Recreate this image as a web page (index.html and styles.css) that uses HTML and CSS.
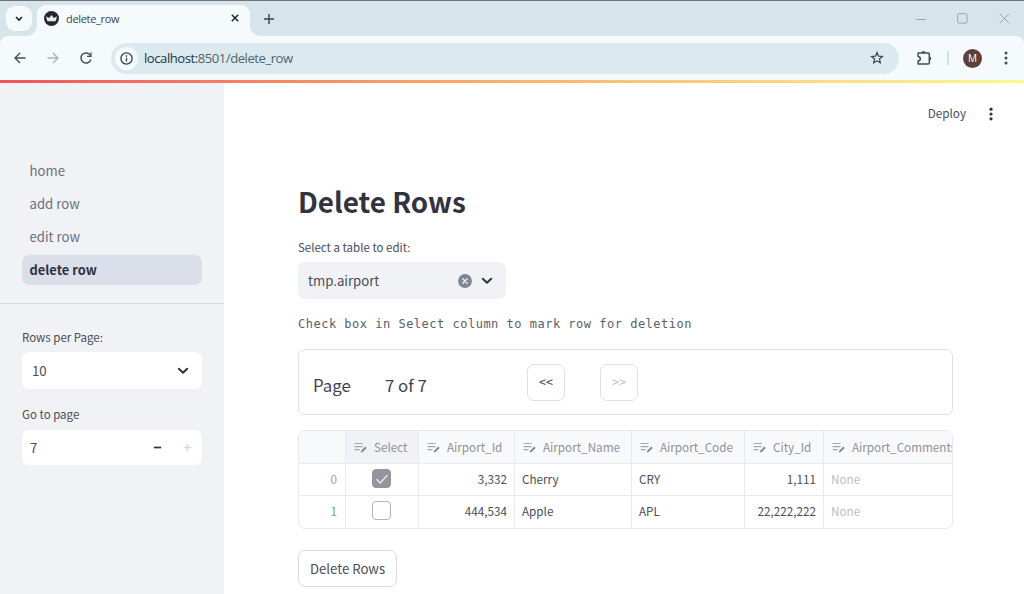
FILE: index.html
```html
<!DOCTYPE html>
<html lang="en">
<head>
<meta charset="utf-8">
<title>delete_row</title>
<link rel="stylesheet" href="styles.css">
</head>
<body>
<svg class="defs" width="0" height="0" aria-hidden="true">
  <symbol id="edit" viewBox="0 0 13 12"><path d="M.6 1.5h8M.6 4.6h8M.6 7.7h5" stroke="#a3a8b4" stroke-width="1.2" fill="none"/><path d="M6.7 10.6l.5-1.9 4.1-4.1 1.4 1.4-4.1 4.1z" fill="#808495"/></symbol>
  <symbol id="chev" viewBox="0 0 12 8"><path d="M1.8 1.8L6 5.8l4.2-4" fill="none" stroke="currentColor" stroke-width="2" stroke-linecap="round" stroke-linejoin="round"/></symbol>
</svg>
<header class="browser">
  <div class="tabs">
    <button class="tab-search"><svg width="8" height="6" viewBox="0 0 8 6"><path d="M1 1l3 3 3-3" fill="none" stroke="#1f2a2e" stroke-width="1.7"/></svg></button>
    <div class="tab">
      <svg class="favicon" width="15" height="15" viewBox="0 0 15 15"><circle cx="7.5" cy="7.5" r="7.5" fill="#262730"/><path d="M2 5.5l3.2 1.6L7.5 4l2.3 3.1L13 5.5l-1.4 4.7H3.4z" fill="#e8edf1"/></svg>
      <span class="tab-title">delete_row</span>
      <svg class="tab-close" width="8" height="8" viewBox="0 0 8 8"><path d="M.8.8l6.4 6.4M7.2.8L.8 7.2" stroke="#1f2a2e" stroke-width="1.5"/></svg>
    </div>
    <svg class="new-tab" width="10" height="10" viewBox="0 0 10 10"><path d="M5 0v10M0 5h10" stroke="#36474c" stroke-width="1.4"/></svg>
    <div class="win">
      <svg width="10" height="10" viewBox="0 0 10 10"><path d="M0 5.5h10" stroke="#9ba7ad"/></svg>
      <svg width="11" height="11" viewBox="0 0 11 11"><rect x=".7" y=".7" width="9.4" height="9.4" rx="1" fill="none" stroke="#9ba7ad"/></svg>
      <svg width="11" height="11" viewBox="0 0 11 11"><path d="M.7.7l9.6 9.6M10.3.7L.7 10.3" stroke="#9ba7ad"/></svg>
    </div>
  </div>
  <div class="toolbar">
    <svg class="back" width="12" height="12" viewBox="0 0 12 12"><path d="M11.5 6H1.2M6 1L1 6l5 5" fill="none" stroke="#3c5057" stroke-width="1.4"/></svg>
    <svg class="forward" width="12" height="12" viewBox="0 0 12 12"><path d="M.5 6h10.3M6 1l5 5-5 5" fill="none" stroke="#a9b3b8" stroke-width="1.4"/></svg>
    <svg class="reload" width="12" height="12" viewBox="0 0 12 12"><path d="M10.2 3.3A5 5 0 1 0 10.8 7.5" fill="none" stroke="#3c5057" stroke-width="1.5"/><path d="M11.6.4v4.7H6.9V3.8h3.4V.4z" fill="#3c5057"/></svg>
    <div class="address">
      <span class="info"><svg width="13" height="13" viewBox="0 0 13 13"><circle cx="6.5" cy="6.5" r="5.6" fill="none" stroke="#2f3f45" stroke-width="1.3"/><path d="M6.5 5.7v3.8M6.5 3.3v1.4" stroke="#2f3f45" stroke-width="1.3"/></svg></span>
      <span class="url"><span class="host">localhost:</span>8501/delete_row</span>
      <svg class="star" width="14" height="14" viewBox="0 0 14 14"><path d="M7 1.6l1.55 3.55 3.85.35-2.9 2.55.85 3.8L7 9.85l-3.35 2 .85-3.8L1.6 5.5l3.85-.35z" fill="none" stroke="#3a4649" stroke-width="1.2"/></svg>
    </div>
    <svg class="ext" width="17" height="16" viewBox="0 0 17 16"><path d="M2 3h3.6M9.2 3h3.1a1 1 0 0 1 1 1v9a1 1 0 0 1-1 1H2.1v-3.1a2.2 2.2 0 0 0 0-4.4V3H12" fill="none" stroke="#3c5057" stroke-width="1.5" stroke-linejoin="round"/><path d="M5.5 3a1.9 1.9 0 0 1 3.8 0zM13.3 6.5a1.9 1.9 0 0 1 0 3.8z" fill="#3c5057"/></svg>
    <span class="sep"></span>
    <span class="avatar">M</span>
    <svg class="menu" width="4" height="14" viewBox="0 0 4 14"><g fill="#3c5057"><circle cx="2" cy="2" r="1.5"/><circle cx="2" cy="7" r="1.5"/><circle cx="2" cy="12" r="1.5"/></g></svg>
  </div>
</header>
<div class="ribbon"></div>
<div class="app">
  <aside class="sidebar">
    <nav class="nav">
      <a>home</a><a>add row</a><a>edit row</a><a class="active">delete row</a>
    </nav>
    <div class="controls">
      <label>Rows per Page:</label>
      <div class="field rows"><span>10</span><svg width="12" height="8"><use href="#chev"/></svg></div>
      <label>Go to page</label>
      <div class="field number"><span>7</span>
        <svg class="minus" width="9" height="9" viewBox="0 0 9 9"><path d="M.8 4.5h7.4" stroke="#31333f" stroke-width="1.7"/></svg>
        <svg class="plus" width="9" height="9" viewBox="0 0 9 9"><path d="M.8 4.5h7.4M4.5.8v7.4" stroke="#d5d9e3" stroke-width="1.7"/></svg>
      </div>
    </div>
  </aside>
  <main class="main">
    <div class="actions"><span>Deploy</span><svg width="4" height="14" viewBox="0 0 4 14"><g fill="#31333f"><circle cx="2" cy="2.2" r="1.6"/><circle cx="2" cy="7" r="1.6"/><circle cx="2" cy="11.8" r="1.6"/></g></svg></div>
    <h1>Delete Rows</h1>
    <label class="table-label">Select a table to edit:</label>
    <div class="select"><span>tmp.airport</span>
      <svg class="clear" width="14" height="14" viewBox="0 0 14 14"><circle cx="7" cy="7" r="6.9" fill="#808495"/><path d="M4.8 4.8l4.4 4.4M9.2 4.8L4.8 9.2" stroke="#f0f2f6" stroke-width="1.4" stroke-linecap="round"/></svg>
      <svg width="12" height="8"><use href="#chev"/></svg>
    </div>
    <p class="hint">Check box in Select column to mark row for deletion</p>
    <section class="pager">
      <span class="word">Page</span><span class="count">7 of 7</span><button>&lt;&lt;</button><button disabled>&gt;&gt;</button>
    </section>
    <section class="grid">
      <div class="cell head"></div>
      <div class="cell head selected"><svg><use href="#edit"/></svg>Select</div>
      <div class="cell head"><svg><use href="#edit"/></svg>Airport_Id</div>
      <div class="cell head"><svg><use href="#edit"/></svg>Airport_Name</div>
      <div class="cell head"><svg><use href="#edit"/></svg>Airport_Code</div>
      <div class="cell head"><svg><use href="#edit"/></svg>City_Id</div>
      <div class="cell head last"><svg><use href="#edit"/></svg>Airport_Comments</div>
      <div class="cell idx">0</div>
      <div class="cell check"><span class="box on"><svg width="14" height="12" viewBox="0 0 14 12"><path d="M1.5 6.2l3.7 3.7 7.3-8" fill="none" stroke="#e6e7ea" stroke-width="1.5"/></svg></span></div>
      <div class="cell num">3,332</div><div class="cell">Cherry</div><div class="cell">CRY</div><div class="cell num">1,111</div><div class="cell none last">None</div>
      <div class="cell idx hover">1</div>
      <div class="cell check"><span class="box"></span></div>
      <div class="cell num">444,534</div><div class="cell">Apple</div><div class="cell">APL</div><div class="cell num">22,222,222</div><div class="cell none last">None</div>
    </section>
    <button class="delete">Delete Rows</button>
  </main>
</div>
</body>
</html>
```
FILE: styles.css
```css
* { box-sizing: border-box; }
html, body { height: 100%; }
body {
  margin: 0;
  overflow: hidden;
  display: flex;
  flex-direction: column;
  background: #fff;
  color: #4a4c57;
  font-family: "Noto Sans CJK SC", "Noto Sans", sans-serif;
  font-size: 13.2px;
}
svg { display: block; flex: none; }
.defs { display: none; }
button { font: inherit; color: inherit; padding: 0; margin: 0; }

/* Browser chrome */
.browser { flex: none; height: 80px; background: #d7e4ea; border-top: 1px solid #6f7478; font-family: "Open Sans", "Noto Sans", sans-serif; }
.tabs { height: 35px; display: flex; align-items: center; padding-left: 6px; }
.tab-search { width: 26px; height: 25px; border: 0; border-radius: 9px; background: #f5fafd; display: flex; align-items: center; justify-content: center; }
.tab { align-self: flex-end; width: 213px; height: 31px; margin-left: 5px; padding: 0 11px 5px 7px; border-radius: 9px 9px 0 0; background: #f5fafd; display: flex; align-items: center; position: relative; }
.tab::before, .tab::after { content: ""; position: absolute; bottom: 0; width: 10px; height: 10px; }
.tab::before { left: -10px; background: radial-gradient(circle at 0 0, transparent 9.5px, #f5fafd 10px); }
.tab::after { right: -10px; background: radial-gradient(circle at 100% 0, transparent 9.5px, #f5fafd 10px); }
.tab-title { margin-left: 7px; font-size: 11px; letter-spacing: -.32px; color: #36474c; }
.tab-close { margin-left: auto; }
.new-tab { margin-left: 14px; }
.win { margin-left: auto; margin-right: 14px; display: flex; gap: 31px; align-items: center; }
.toolbar { height: 44px; display: flex; align-items: center; padding: 0 16px 0 14px; border-radius: 8px 8px 0 0; background: #f5fafd; }
.forward { margin-left: 21px; }
.reload { margin-left: 21px; }
.address { width: 788px; height: 31px; margin-left: 19px; padding: 0 15px 0 4px; border-radius: 16px; background: #dbeaef; display: flex; align-items: center; }
.info { width: 23px; height: 23px; border-radius: 50%; background: #f5fafd; display: flex; align-items: center; justify-content: center; }
.url { margin-left: 6px; font-size: 13.1px; letter-spacing: -.46px; color: #536267; }
.host { color: #26363b; }
.star { margin-left: auto; }
.ext { margin-left: 17px; }
.sep { width: 2px; height: 14px; margin-left: 14px; background: #bdeafa; }
.avatar { width: 19px; height: 19px; margin-left: 14px; border-radius: 50%; background: #5d4037; color: #fff; font-size: 10px; display: flex; align-items: center; justify-content: center; }
.menu { margin-left: auto; }
.ribbon { flex: none; height: 3px; background: linear-gradient(90deg, #f35358, #fbb16c 50%, #fdf98f); }

/* Page */
.app { flex: 1; display: flex; min-height: 0; }
.sidebar { width: 224px; flex: none; background: #f0f2f6; }
.nav { padding: 73px 22px 18px; display: grid; gap: 3px; border-bottom: 1px solid #d6d9df; }
.nav a { height: 30px; line-height: 30px; padding-left: 7.5px; border-radius: 7px; color: #6d6f79; }
.nav .active { background: #dadfea; color: #31333f; font-weight: 700; font-size: 12.9px; }
.controls { padding: 22px 22px 0; }
label { display: block; height: 22px; line-height: 22px; font-size: 11.5px; }
.field { display: flex; align-items: center; background: #fff; border-radius: 7px; }
.field svg { color: #31333f; }
.rows { height: 37px; margin: 4px 0 14px; padding: 0 13px 0 10px; justify-content: space-between; }
.number { height: 35px; margin: 5px 0 0; padding: 0 10px 0 8px; }
.minus { margin-left: auto; }
.plus { margin-left: 21px; }
.main { flex: 1; min-width: 0; padding-left: 74px; }
.actions { height: 61px; padding-right: 31px; display: flex; align-items: center; justify-content: flex-end; gap: 23px; font-size: 11.7px; }
.actions span { padding-bottom: 2px; }
h1 { margin: 32px 0 0; height: 50px; line-height: 50px; font-size: 27.8px; font-weight: 700; color: #31333f; }
.table-label { margin-top: 10px; }
.select { width: 208px; height: 37px; margin-top: 4px; padding: 0 13px 0 10px; display: flex; align-items: center; gap: 9px; border-radius: 7px; background: #f0f2f6; }
.select .clear { margin-left: auto; }
.select svg { color: #31333f; }
.hint { margin: 14px 0 0; height: 22px; line-height: 22px; font-family: "DejaVu Sans Mono", monospace; font-size: 12px; letter-spacing: .5px; color: #5b5d67; white-space: nowrap; }
.pager { width: 655px; height: 66px; margin-top: 14px; display: flex; border: 1px solid #dfe0e3; border-radius: 7px; padding: 14px 13px 0 14px; font-size: 16.8px; color: #41434e; }
.pager span { line-height: 43px; }
.pager .word { width: 72px; }
.pager .count { width: 142px; }
.pager button { width: 38px; height: 37px; border: 1px solid #dfe0e3; border-radius: 7px; background: #fff; font-size: 12.6px; margin-right: 35px; padding-bottom: 3px; }
.pager button:disabled { color: #bdbec3; }
.grid { width: 655px; height: 99px; margin-top: 15px; overflow: hidden; display: grid; grid-template-columns: 47px 73px 96px 117px 113px 79px 128px; grid-template-rows: 33px 32px 32px; border: 1px solid #e9eaec; border-radius: 7px; font-size: 11.7px; }
.cell { padding: 0 7px 2px; display: flex; align-items: center; border-right: 1px solid #e9eaec; border-bottom: 1px solid #e9eaec; white-space: nowrap; overflow: hidden; }
.cell:nth-last-child(-n+7) { border-bottom: 0; padding-bottom: 3px; }
.last { border-right: 0; padding-right: 0; }
.head { background: #f8f9fb; color: #8f919a; padding-left: 8px; }
.head svg { width: 13px; height: 12px; margin: 3px 7px 0 0; }
.selected { background: #f0f2f6; }
.num { justify-content: flex-end; }
.idx { justify-content: flex-end; color: #9ea0a8; padding-right: 8px; }
.hover { color: #7893b5; }
.none { color: #bdbec3; }
.check { justify-content: center; padding-right: 8px; }
.box { width: 19px; height: 19px; border: 1px solid #b1b3ba; border-radius: 4px; display: flex; align-items: center; justify-content: center; }
.on { background: #93949c; border-color: #93949c; }
.delete { display: block; width: 99px; height: 37px; margin-top: 21px; padding-bottom: 1px; border: 1px solid #d9dadd; border-radius: 7px; background: #fff; }
```
